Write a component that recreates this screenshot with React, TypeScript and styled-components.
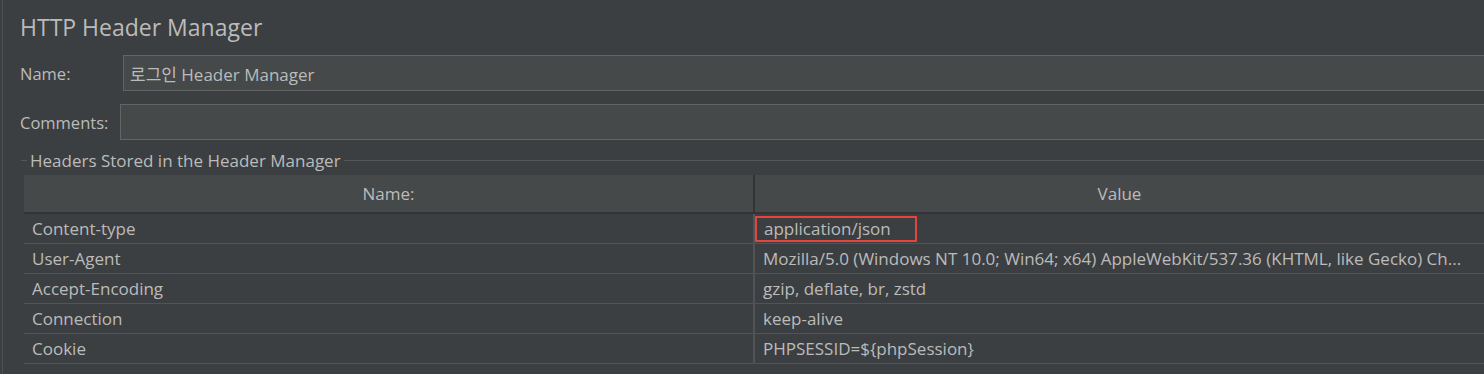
import React from "react";
import styled, { createGlobalStyle } from "styled-components";

const GlobalStyle = createGlobalStyle`
  html, body {
    margin: 0;
    padding: 0;
    background: #3c3f41;
    overflow: hidden;
  }
  body {
    font-family: "Open Sans", "Noto Sans CJK KR", sans-serif;
    color: #bbbbbb;
  }
`;

const Panel = styled.div`
  margin-left: 2px;
  border-left: 1px solid #4d5052;
  height: 374px;
  padding-left: 17px;
  box-sizing: border-box;
  overflow: hidden;
`;

const Title = styled.h1`
  margin: 0;
  padding-top: 12px;
  height: 43px;
  box-sizing: border-box;
  font-size: 23px;
  font-weight: 400;
  line-height: 30px;
  color: #bbbbbb;
`;

const FieldRow = styled.div<{ $labelWidth: number; $gap: number }>`
  display: grid;
  grid-template-columns: ${(p) => p.$labelWidth}px 1fr;
  align-items: center;
  margin-top: ${(p) => p.$gap}px;
  height: 36px;
`;

const Label = styled.label`
  font-size: 16.5px;
  color: #bbbbbb;
`;

const TextBox = styled.div`
  height: 36px;
  box-sizing: border-box;
  border: 1px solid #646464;
  border-right: none;
  background: #45494a;
  padding-left: 6px;
  display: flex;
  align-items: center;
  font-size: 17px;
  color: #bbbbbb;
  white-space: nowrap;
`;

const Group = styled.section`
  margin-top: 8px;
  margin-left: 1px;
`;

const GroupTitle = styled.div`
  display: flex;
  align-items: center;
  gap: 3px;
  height: 24px;
  margin-bottom: 3px;
  font-size: 17px;
  color: #bbbbbb;
  white-space: nowrap;

  &::before {
    content: "";
    width: 6px;
    border-top: 1px solid #555759;
  }
  &::after {
    content: "";
    flex: 1;
    border-top: 1px solid #555759;
  }
`;

const Table = styled.div`
  margin-left: 3px;
  display: grid;
  grid-template-columns: 731px 1fr;
`;

const HeadCell = styled.div<{ $last?: boolean }>`
  height: 37px;
  background: #45494a;
  border-bottom: 2px solid #313335;
  border-right: ${(p) => (p.$last ? "none" : "2px solid #313335")};
  display: flex;
  align-items: center;
  justify-content: center;
  font-size: 17px;
  color: #bbbbbb;
`;

const Cell = styled.div<{ $last?: boolean }>`
  height: 29px;
  border-bottom: 1px solid #515456;
  border-right: ${(p) => (p.$last ? "none" : "2px solid #515456")};
  display: flex;
  align-items: center;
  padding-left: 8px;
  font-size: 17px;
  color: #bbbbbb;
  white-space: nowrap;
  overflow: hidden;
`;

const Marked = styled.span`
  display: inline-flex;
  align-items: center;
  height: 26px;
  box-sizing: border-box;
  margin-left: -8px;
  padding: 0 24px 0 7px;
  border: 2px solid #e5443d;
`;

const headers: { name: string; value: string; marked?: boolean }[] = [
  { name: "Content-type", value: "application/json", marked: true },
  {
    name: "User-Agent",
    value:
      "Mozilla/5.0 (Windows NT 10.0; Win64; x64) AppleWebKit/537.36 (KHTML, like Gecko) Ch...",
  },
  { name: "Accept-Encoding", value: "gzip, deflate, br, zstd" },
  { name: "Connection", value: "keep-alive" },
  { name: "Cookie", value: "PHPSESSID=${phpSession}" },
];

const App: React.FC = () => {
  return (
    <>
      <GlobalStyle />
      <Panel>
        <Title>HTTP Header Manager</Title>
        <FieldRow $labelWidth={103} $gap={12}>
          <Label>Name:</Label>
          <TextBox>로그인 Header Manager</TextBox>
        </FieldRow>
        <FieldRow $labelWidth={100} $gap={13}>
          <Label>Comments:</Label>
          <TextBox />
        </FieldRow>
        <Group>
          <GroupTitle>Headers Stored in the Header Manager</GroupTitle>
          <Table>
            <HeadCell>Name:</HeadCell>
            <HeadCell $last>Value</HeadCell>
            {headers.map((h) => (
              <React.Fragment key={h.name}>
                <Cell>{h.name}</Cell>
                <Cell $last>
                  {h.marked ? <Marked>{h.value}</Marked> : h.value}
                </Cell>
              </React.Fragment>
            ))}
          </Table>
        </Group>
      </Panel>
    </>
  );
};

export default App;
